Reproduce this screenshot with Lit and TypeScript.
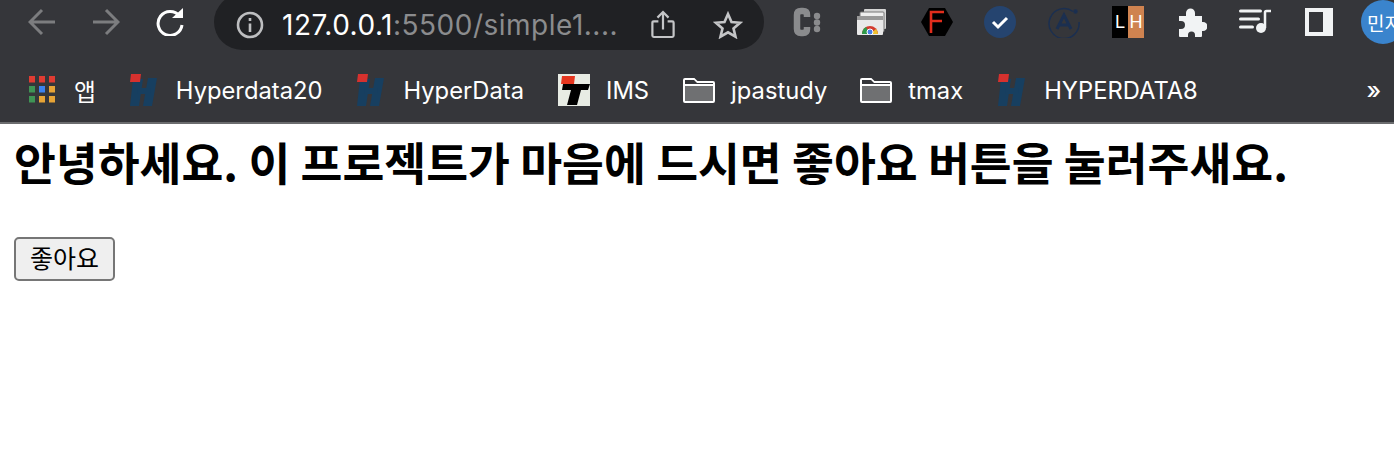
import { LitElement, html, css, svg } from "lit";
import { customElement } from "lit/decorators.js";

const hLogo = html`<svg class="ico" width="30" height="32" viewBox="0 0 30 32">
  <path d="M3 5h10L9 32H0z M18 4h9l-5 28h-9z" fill="#173f60"/><path d="M8 14h13l-1 6H7z" fill="#173f60"/>
  <path d="M1 0h10l-1 8H0z" fill="#d6312e"/></svg>`;

const folder = html`<svg class="ico" width="32" height="26" viewBox="0 0 32 26">
  <path d="M1 24V3q0-1 1-1h9l3 3h16q1 0 1 1v18q0 1-1 1H2q-1 0-1-1z" fill="#6f7072" stroke="#fff" stroke-width="2"/>
  <path d="M2 3h9l3 3h16v2H2z" fill="#35363a"/><path d="M1 8h30" stroke="#fff" stroke-width="2"/></svg>`;

@customElement("app-root")
export class AppRoot extends LitElement {
  static styles = css`
    :host { display: block; width: 1394px; height: 464px; overflow: hidden; background: #fff; font-family: "Inter", "Noto Sans CJK KR", sans-serif; }
    .toolbar { height: 73px; background: #35363a; display: flex; align-items: flex-start; overflow: hidden; }
    .nav { display: flex; align-items: center; height: 44px; flex: none; }
    .nav svg { display: block; }
    .back { margin-left: 28px; }
    .forward { margin-left: 36px; }
    .reload { margin-left: 36px; }
    .omnibox { flex: none; width: 550px; height: 56px; margin: -6px 0 0 30px; box-sizing: border-box; padding: 6px 22px 0 22px; border-radius: 28px; background: #202124; display: flex; align-items: center; color: #8b8c8e; font: 28px "Inter", sans-serif; letter-spacing: 0.5px; }
    .host { color: #fff; margin-left: 18px; }
    .path { white-space: nowrap; }
    .share { margin-left: auto; }
    .star { margin-left: 38px; margin-right: -1px; }
    .exts { display: flex; height: 44px; align-items: center; flex: none; }
    .e-c { margin-left: 28px; }
    .e-win { margin-left: 35px; }
    .e-f { margin-left: 34px; }
    .e-check { margin-left: 31px; }
    .e-a { margin-left: 32px; }
    .e-lh { margin-left: 32px; display: flex; width: 32px; height: 32px; font: 18px "Liberation Sans", sans-serif; color: #fff; }
    .e-lh span { flex: 1; display: flex; align-items: center; justify-content: center; }
    .l { background: #000; } .h { background: #cf8350; }
    .e-puzzle { margin-left: 34px; }
    .e-music { margin-left: 32px; }
    .e-panel { margin-left: 34px; }
    .avatar { flex: none; width: 44px; height: 44px; margin: 0 0 0 28px; border-radius: 50%; background: #3a84cd; color: #fff; font-size: 19px; display: flex; align-items: center; padding-left: 6px; box-sizing: border-box; white-space: nowrap; overflow: hidden; }
    .bookmarks { height: 51px; box-sizing: border-box; padding-bottom: 15px; background: #35363a; border-bottom: 2px solid #6b6c6e; display: flex; align-items: center; color: #fff; font: 23.75px "Inter", "Noto Sans CJK KR", sans-serif; white-space: nowrap; }
    .bm { display: flex; align-items: center; flex: none; }
    .ico { display: block; flex: none; }
    .apps { margin-left: 29px; }
    .apps .ico { margin-right: 19px; }
    .b1 { margin-left: 34px; } .b1 .ico { margin-right: 16px; }
    .b2 { margin-left: 35px; } .b2 .ico { margin-right: 16px; }
    .b3 { margin-left: 34px; } .b3 .ico { margin-right: 16px; }
    .b4 { margin-left: 34px; } .b4 .ico { margin-right: 16px; }
    .b5 { margin-left: 33px; } .b5 .ico { margin-right: 16px; }
    .b6 { margin-left: 35px; } .b6 .ico { margin-right: 16px; }
    .more { margin-left: auto; margin-right: 13px; font-size: 24px; font-weight: 500; }
    main { padding: 14px; }
    h1 { margin: 0 0 53px; font: 700 45.5px/46px "Noto Sans CJK KR", sans-serif; color: #000; white-space: nowrap; }
    button { display: block; width: 101px; height: 44px; padding: 0 0 6px; box-sizing: border-box; border: 2px solid #767676; border-radius: 5px; background: #efefef; color: #000; font: 25px "Noto Sans CJK KR", sans-serif; }
  `;

  render() {
    return html`
      <div class="toolbar">
        <div class="nav">
          <svg class="back" width="28" height="28" viewBox="0 0 28 28" fill="none" stroke="#7c7d7f" stroke-width="3"><path d="M27 14H2M14 2 2 14l12 12"/></svg>
          <svg class="forward" width="28" height="28" viewBox="0 0 28 28" fill="none" stroke="#7c7d7f" stroke-width="3"><path d="M1 14h25M14 2l12 12-12 12"/></svg>
          <svg class="reload" width="28" height="28" viewBox="0 0 28 28"><path d="M23.5 8A12 12 0 1 0 26 17" fill="none" stroke="#fff" stroke-width="3"/><path d="M16 10h11V0z" fill="#fff"/></svg>
        </div>
        <div class="omnibox">
          <svg width="28" height="28" viewBox="0 0 28 28" fill="none" stroke="#bdbec0" stroke-width="2.6"><circle cx="14" cy="14" r="12"/><path d="M14 12.5V21M14 7v3"/></svg>
          <span class="host">127.0.0.1</span><span class="path">:5500/simple1....</span>
          <svg class="share" width="24" height="30" viewBox="0 0 26 30" fill="none" stroke="#c4c5c7" stroke-width="2.4"><path d="M8 11H3q-1.5 0-1.5 1.5v14q0 1.5 1.500 1.500h20q1.500 0 1.500-1.500v-14Q24.500 11 23 11h-5M13 20V2M7 7l6-6 6 6"/></svg>
          <svg class="star" width="30" height="28" viewBox="0 0 30 28" fill="none" stroke="#c4c5c7" stroke-width="2.6"><path d="m15 3 3.500 8 8.500.8-6.500 5.600 2 8.300L15 21.300 7.500 25.700l2-8.300L3 11.800l8.500-.8z"/></svg>
        </div>
        <div class="exts">
          <svg class="e-c" width="30" height="30" viewBox="0 0 30 30"><path d="M15 10V8q0-4-4-4H9Q5 4 5 8v14q0 4 4 4h2q4 0 4-4v-2" fill="none" stroke="#8a8b8d" stroke-width="6.500"/><circle cx="25" cy="9" r="3.200" fill="#8a8b8d"/><circle cx="25" cy="15.500" r="3.200" fill="#8a8b8d"/><circle cx="25" cy="22" r="3.200" fill="#8a8b8d"/></svg>
          <svg class="e-win" width="30" height="26" viewBox="0 0 30 26"><rect x="7" y="0" width="22" height="20" rx="1" fill="#d5d5d5"/><rect x="3" y="3" width="24" height="20" rx="1" fill="#eee" stroke="#777"/><rect x="0" y="7" width="26" height="19" rx="1" fill="#e9e9e9"/><rect x="0" y="7" width="26" height="4" fill="#999"/><path d="M5 25a8 8 0 0 1 16 0z" fill="#d33b2f"/><path d="M5 25a8 8 0 0 1 4-7l4 7z" fill="#2e9a4a"/><path d="M21 25a8 8 0 0 0-2-5l-6 5z" fill="#efc12e"/><circle cx="13" cy="23" r="3" fill="#4a80e8" stroke="#fff"/></svg>
          <svg class="e-f" width="32" height="28" viewBox="0 0 32 28"><path d="M0 14 8 0h16l8 14-8 14H8z" fill="#000"/><path d="M10 25V4h13M10 13h11" fill="none" stroke="#e12d1c" stroke-width="2.600"/></svg>
          <svg class="e-check" width="32" height="32" viewBox="0 0 32 32"><circle cx="16" cy="16" r="16" fill="#25446f"/><path d="m9 16 5 5 9-9" fill="none" stroke="#fff" stroke-width="3"/></svg>
          <svg class="e-a" width="32" height="32" viewBox="0 0 32 32" fill="none" stroke="#1b2f50" stroke-width="1.500"><path d="M25 5.500A15 15 0 1 0 31 16"/><circle cx="27.500" cy="5.500" r="1.500" fill="#1b2f50"/><path d="m9 23 7-14 7 14M12 19h8" stroke-width="3"/></svg>
          <div class="e-lh"><span class="l">L</span><span class="h">H</span></div>
          <svg class="e-puzzle" width="29" height="29" viewBox="0 0 29 29"><path d="M1 8h7V5a4.500 4.500 0 0 1 9 0v3h7v6h1a4.500 4.500 0 0 1 0 9h-1v5q0 1-1 1h-6v-2a3.500 3.500 0 0 0-7 0v2H2q-1 0-1-1v-7h2a4 4 0 0 0 0-8H1z" fill="#f1f3f4"/></svg>
          <svg class="e-music" width="32" height="30" viewBox="0 0 32 30"><path d="M1.500 4h20M1.500 12h18M1.500 20h12" stroke="#f1f3f4" stroke-width="3" stroke-linecap="round"/><path d="M26 21V5.500Q26 4 27.500 4H32" fill="none" stroke="#f1f3f4" stroke-width="2.500"/><circle cx="22" cy="21" r="5" fill="#f1f3f4"/></svg>
          <svg class="e-panel" width="28" height="28" viewBox="0 0 28 28"><path d="M0 0h28v28H0zM4 4v20h14V4z" fill="#f1f3f4" fill-rule="evenodd"/></svg>
        </div>
        <div class="avatar">민지</div>
      </div>
      <div class="bookmarks">
        <div class="bm apps">
          <svg class="ico" width="26" height="28" viewBox="0 0 26 28">
            ${[
              [0, 0, "#e03c32"], [10, 0, "#e03c32"], [20, 0, "#e03c32"],
              [0, 10, "#3f9455"], [10, 10, "#3b82f0"], [20, 10, "#e7a436"],
              [0, 20, "#3f9455"], [10, 20, "#e7a436"], [20, 20, "#e7a436"],
            ].map(([x, y, c]) => svg`<rect x=${x} y=${y} width="6" height="6.500" fill=${c} />`)}
          </svg>앱
        </div>
        <div class="bm b1">${hLogo}Hyperdata20</div>
        <div class="bm b2">${hLogo}HyperData</div>
        <div class="bm b3">
          <svg class="ico" width="32" height="32" viewBox="0 0 32 32"><rect width="32" height="32" fill="#e8ece4"/><path d="M4 2h13l-1 8H3z" fill="#e5361f"/><path d="M5 10h27l-2 6H23l-4 15H9l4-15H4z" fill="#000"/></svg>IMS
        </div>
        <div class="bm b4">${folder}jpastudy</div>
        <div class="bm b5">${folder}tmax</div>
        <div class="bm b6">${hLogo}HYPERDATA8</div>
        <div class="more">»</div>
      </div>
      <main>
        <h1>안녕하세요. 이 프로젝트가 마음에 드시면 좋아요 버튼을 눌러주새요.</h1>
        <button>좋아요</button>
      </main>
    `;
  }
}
